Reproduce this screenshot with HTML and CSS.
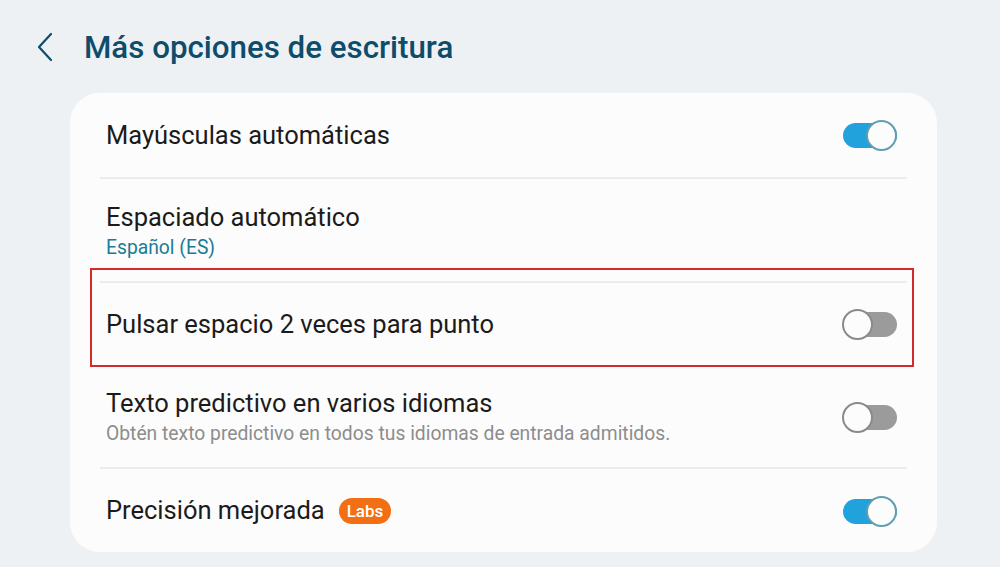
FILE: index.html
```html
<!DOCTYPE html>
<html lang="es">
<head>
<meta charset="utf-8">
<link rel="stylesheet" href="styles.css">
</head>
<body>
<div class="page">
  <header class="header">
    <svg class="back" width="20" height="30" viewBox="0 0 20 30"><polyline points="15,2 3,15 15,28" fill="none" stroke="#0e4c6b" stroke-width="2.2" stroke-linecap="round" stroke-linejoin="round"/></svg>
    <h1 class="title">Más opciones de escritura</h1>
  </header>
  <main class="card">
    <div class="row r1">
      <div class="label"><div class="main">Mayúsculas automáticas</div></div>
      <div class="toggle on"><span class="knob"></span></div>
    </div>
    <div class="divider"></div>
    <div class="row r2">
      <div class="label"><div class="main">Espaciado automático</div><div class="sub teal">Español (ES)</div></div>
    </div>
    <div class="divider"></div>
    <div class="row r3">
      <div class="label"><div class="main">Pulsar espacio 2 veces para punto</div></div>
      <div class="toggle off"><span class="knob"></span></div>
    </div>
    <div class="divider"></div>
    <div class="row r4">
      <div class="label"><div class="main">Texto predictivo en varios idiomas</div><div class="sub grey">Obtén texto predictivo en todos tus idiomas de entrada admitidos.</div></div>
      <div class="toggle off"><span class="knob"></span></div>
    </div>
    <div class="divider"></div>
    <div class="row r5">
      <div class="label inline"><div class="main">Precisión mejorada</div><span class="badge">Labs</span></div>
      <div class="toggle on"><span class="knob"></span></div>
    </div>
    <div class="highlight"></div>
  </main>
</div>
</body>
</html>
```
FILE: styles.css
```css
* { box-sizing: border-box; margin: 0; padding: 0; }
html, body { width: 1000px; height: 567px; overflow: hidden; }
body { background: #eef1f4; font-family: Roboto, "Noto Sans", sans-serif; }
.page { padding: 0 63px 0 70px; }
.header { height: 93px; display: flex; align-items: center; padding-top: 1px; }
.back { margin-left: -34px; margin-right: 28px; flex: none; }
.title { font-size: 31.3px; font-weight: 500; color: #0e4c6b; }
.card { position: relative; background: #fcfcfc; border-radius: 30px; height: 459px; display: flex; flex-direction: column; padding: 0 40px 0 36px; }
.row { display: flex; align-items: center; justify-content: space-between; }
.r1 { height: 84px; }
.r2 { height: 102px; padding-top: 2px; }
.r3 { height: 82px; }
.r4 { height: 100px; }
.r5 { height: 83px; }
.divider { height: 2px; background: #ececec; margin: 0 -10px 0 -6px; }
.label { display: flex; flex-direction: column; }
.label.inline { flex-direction: row; align-items: center; }
.main { font-size: 25.5px; color: #1b1b1b; line-height: 31px; }
.sub { font-size: 19.3px; line-height: 24px; margin-top: 3px; }
.teal { color: #1c7a97; }
.grey { color: #8d8d8d; }
.badge { margin-left: 14px; background: #f36f13; color: #fff; font-size: 17px; font-weight: 500; height: 26px; line-height: 26px; padding: 0 8px; border-radius: 13px; }
.toggle { position: relative; width: 55px; height: 30px; flex: none; }
.toggle::before { content: ""; position: absolute; left: 1px; right: 0; top: 3px; height: 25px; border-radius: 13px; }
.toggle.on::before { background: #22a2dc; }
.toggle.off::before { background: #9b9b9b; }
.knob { position: absolute; top: 0; width: 31px; height: 31px; border-radius: 50%; background: #fcfcfc; border: 2px solid #8a8a8a; }
.toggle.on .knob { right: 0; border-color: #5f9fb1; }
.toggle.off .knob { left: 0; }
.highlight { position: absolute; left: 20px; top: 175px; width: 824px; height: 99px; border: 2px solid #d32a2a; pointer-events: none; }
```
